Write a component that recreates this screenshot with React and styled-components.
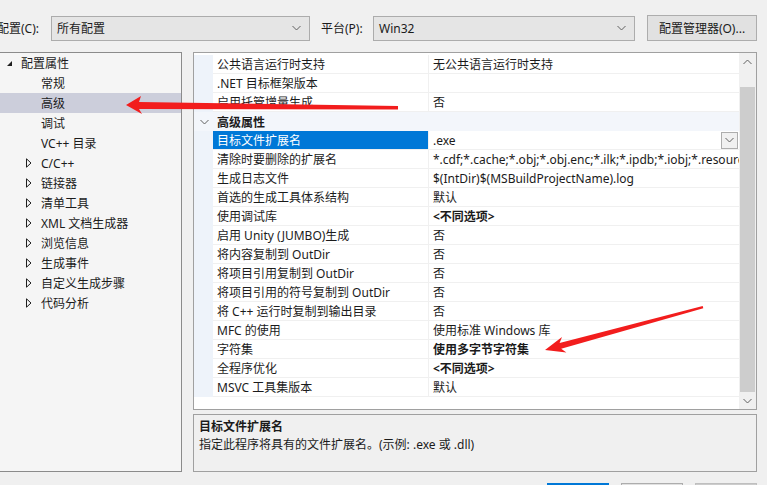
import React from "react";
import styled, { createGlobalStyle } from "styled-components";

const GlobalStyle = createGlobalStyle`
  html, body {
    margin: 0;
    padding: 0;
    background: #f0f0f0;
  }
  body {
    font-family: "Noto Sans", "Noto Sans CJK SC", sans-serif;
    font-size: 12px;
    color: #1b1b1b;
  }
`;

const treeItems = [
  { text: "配置属性", level: 0, open: true },
  { text: "常规", level: 1 },
  { text: "高级", level: 1, selected: true },
  { text: "调试", level: 1 },
  { text: "VC++ 目录", level: 1 },
  { text: "C/C++", level: 1, closed: true },
  { text: "链接器", level: 1, closed: true },
  { text: "清单工具", level: 1, closed: true },
  { text: "XML 文档生成器", level: 1, closed: true },
  { text: "浏览信息", level: 1, closed: true },
  { text: "生成事件", level: 1, closed: true },
  { text: "自定义生成步骤", level: 1, closed: true },
  { text: "代码分析", level: 1, closed: true },
];

const props = [
  { name: "公共语言运行时支持", value: "无公共语言运行时支持" },
  { name: ".NET 目标框架版本", value: "" },
  { name: "启用托管增量生成", value: "否" },
  { category: "高级属性" },
  { name: "目标文件扩展名", value: ".exe", selected: true },
  { name: "清除时要删除的扩展名", value: "*.cdf;*.cache;*.obj;*.obj.enc;*.ilk;*.ipdb;*.iobj;*.resources;*.tlb;*.tli;*.tlh;*.tmp;*.rsp" },
  { name: "生成日志文件", value: "$(IntDir)$(MSBuildProjectName).log" },
  { name: "首选的生成工具体系结构", value: "默认" },
  { name: "使用调试库", value: "<不同选项>", bold: true },
  { name: "启用 Unity (JUMBO)生成", value: "否" },
  { name: "将内容复制到 OutDir", value: "否" },
  { name: "将项目引用复制到 OutDir", value: "否" },
  { name: "将项目引用的符号复制到 OutDir", value: "否" },
  { name: "将 C++ 运行时复制到输出目录", value: "否" },
  { name: "MFC 的使用", value: "使用标准 Windows 库" },
  { name: "字符集", value: "使用多字节字符集", bold: true },
  { name: "全程序优化", value: "<不同选项>", bold: true },
  { name: "MSVC 工具集版本", value: "默认" },
];

function Chevron({ up }) {
  return (
    <svg width="9" height="6" viewBox="0 0 9 6">
      <path
        d={up ? "M0.5 5 L4.5 1 L8.5 5" : "M0.5 1 L4.5 5 L8.5 1"}
        fill="none"
        stroke="#606060"
        strokeWidth="1"
      />
    </svg>
  );
}

function Expander({ open }) {
  if (open) {
    return (
      <svg width="7" height="7" viewBox="0 0 7 7">
        <path d="M6 1 L6 6 L1 6 Z" fill="#1e1e1e" />
      </svg>
    );
  }
  return (
    <svg width="6" height="10" viewBox="0 0 6 10">
      <path d="M0.5 0.8 L5 5 L0.5 9.2 Z" fill="none" stroke="#1e1e1e" strokeWidth="1" />
    </svg>
  );
}

function App() {
  return (
    <Root>
      <GlobalStyle />
      <TopBar>
        <FieldLabel $w={54} $shift={-3}>配置(C):</FieldLabel>
        <Combo $w={259}>
          <span>所有配置</span>
          <Chevron />
        </Combo>
        <FieldLabel $w={52} $gap={11}>平台(P):</FieldLabel>
        <Combo $w={262}>
          <span>Win32</span>
          <Chevron />
        </Combo>
        <ToolButton>配置管理器(O)...</ToolButton>
      </TopBar>

      <Body>
        <TreePanel>
          {treeItems.map((item) => (
            <TreeRow key={item.text} $level={item.level} $selected={item.selected}>
              <ExpanderSlot>
                {item.open && <Expander open />}
                {item.closed && <Expander />}
              </ExpanderSlot>
              {item.text}
            </TreeRow>
          ))}
        </TreePanel>

        <RightColumn>
          <Grid>
            <Rows>
              {props.map((p) =>
                p.category ? (
                  <CategoryRow key={p.category}>
                    <GutterCell $cat>
                      <Chevron />
                    </GutterCell>
                    <CategoryName>{p.category}</CategoryName>
                  </CategoryRow>
                ) : (
                  <PropRow key={p.name}>
                    <GutterCell />
                    <NameCell $selected={p.selected}>{p.name}</NameCell>
                    <ValueCell $bold={p.bold}>
                      <ValueText>{p.value}</ValueText>
                      {p.selected && (
                        <DropButton>
                          <Chevron />
                        </DropButton>
                      )}
                    </ValueCell>
                  </PropRow>
                )
              )}
            </Rows>
            <ScrollBar>
              <ScrollArrow>
                <Chevron up />
              </ScrollArrow>
              <ScrollTrack>
                <ScrollThumb />
              </ScrollTrack>
              <ScrollArrow>
                <Chevron />
              </ScrollArrow>
            </ScrollBar>
          </Grid>

          <Description>
            <DescTitle>目标文件扩展名</DescTitle>
            <DescText>指定此程序将具有的文件扩展名。(示例: .exe 或 .dll)</DescText>
          </Description>
        </RightColumn>
      </Body>

      <Footer>
        <DialogButton $primary>确定</DialogButton>
        <DialogButton>取消</DialogButton>
        <DialogButton $disabled>应用(A)</DialogButton>
      </Footer>

      {/* red annotation arrows drawn over the dialog */}
      <Overlay width="767" height="485" viewBox="0 0 767 485">
        <polygon
          fill="#f21d1d"
          points="126,105 141,96 139,102 398,106 398,109.5 139,109 142,114"
        />
        <polygon
          fill="#f21d1d"
          points="545,350 562,337 559.6,342.9 702.7,306 703.3,308.3 561.2,348.7 566.4,352.6"
        />
      </Overlay>
    </Root>
  );
}

const Root = styled.div`
  position: relative;
  width: 767px;
  height: 485px;
  overflow: hidden;
  background: #f0f0f0;
`;

const TopBar = styled.div`
  display: flex;
  align-items: center;
  height: 26px;
  padding-top: 15px;
`;

const FieldLabel = styled.div`
  flex: none;
  width: ${(p) => p.$w}px;
  margin-left: ${(p) => (p.$shift || 0) + (p.$gap || 0)}px;
  white-space: nowrap;
`;

const Combo = styled.div`
  flex: none;
  box-sizing: border-box;
  width: ${(p) => p.$w}px;
  height: 25px;
  display: flex;
  align-items: center;
  justify-content: space-between;
  padding: 0 8px 0 5px;
  background: #e5e5e5;
  border: 1px solid #acacac;
`;

const ToolButton = styled.div`
  flex: none;
  box-sizing: border-box;
  width: 110px;
  height: 26px;
  margin-left: 12px;
  display: flex;
  align-items: center;
  justify-content: center;
  background: #e1e1e1;
  border: 1px solid #adadad;
`;

const Body = styled.div`
  display: flex;
  margin-top: 11px;
`;

const TreePanel = styled.div`
  flex: none;
  box-sizing: border-box;
  width: 182px;
  height: 420px;
  background: #f5f5f5;
  border: 1px solid #8b8b8b;
  border-left: none;
`;

const TreeRow = styled.div`
  display: flex;
  align-items: center;
  height: 20px;
  padding-left: ${(p) => (p.$level === 0 ? 6 : 26)}px;
  background: ${(p) => (p.$selected ? "#cccedb" : "transparent")};
  white-space: nowrap;
`;

const ExpanderSlot = styled.span`
  display: inline-flex;
  align-items: center;
  justify-content: flex-start;
  width: 15px;
  height: 20px;
`;

const RightColumn = styled.div`
  flex: none;
  width: 564px;
  margin-left: 11px;
  display: flex;
  flex-direction: column;
  gap: 4px;
`;

const Grid = styled.div`
  box-sizing: border-box;
  height: 358px;
  display: flex;
  background: #fff;
  border: 1px solid #a0a0a0;
`;

const Rows = styled.div`
  flex: 1;
  min-width: 0;
  padding-top: 2px;
`;

const PropRow = styled.div`
  display: grid;
  grid-template-columns: 19px 215px 1fr;
  height: 19px;
`;

const CategoryRow = styled.div`
  display: grid;
  grid-template-columns: 19px 1fr;
  height: 19px;
  background: #f3f6fb;
`;

const GutterCell = styled.div`
  display: flex;
  align-items: center;
  justify-content: center;
  background: ${(p) => (p.$cat ? "transparent" : "#eef3fa")};
  padding-left: 2px;
`;

const CategoryName = styled.div`
  display: flex;
  align-items: center;
  padding-left: 4px;
  font-weight: bold;
`;

const NameCell = styled.div`
  display: flex;
  align-items: center;
  padding-left: 4px;
  white-space: nowrap;
  overflow: hidden;
  color: ${(p) => (p.$selected ? "#fff" : "#1b1b1b")};
  background: ${(p) => (p.$selected ? "#0078d7" : "#fff")};
  border-bottom: 1px solid #f0f0f0;
`;

const ValueCell = styled.div`
  display: flex;
  align-items: center;
  min-width: 0;
  padding-left: 4px;
  font-weight: ${(p) => (p.$bold ? "bold" : "normal")};
  border-left: 1px solid #f0f0f0;
  border-bottom: 1px solid #f0f0f0;
`;

const ValueText = styled.span`
  flex: 1;
  min-width: 0;
  white-space: nowrap;
  overflow: hidden;
`;

const DropButton = styled.div`
  flex: none;
  box-sizing: border-box;
  width: 17px;
  height: 17px;
  margin-right: 1px;
  display: flex;
  align-items: center;
  justify-content: center;
  background: #f0f0f0;
  border: 1px solid #adadad;
`;

const ScrollBar = styled.div`
  flex: none;
  width: 17px;
  display: flex;
  flex-direction: column;
  background: #f0f0f0;
`;

const ScrollArrow = styled.div`
  height: 17px;
  display: flex;
  align-items: center;
  justify-content: center;
`;

const ScrollTrack = styled.div`
  flex: 1;
  display: flex;
  flex-direction: column;
  padding: 17px 1px 0;
`;

const ScrollThumb = styled.div`
  flex: 1;
  background: #cdcdcd;
`;

const Description = styled.div`
  box-sizing: border-box;
  height: 58px;
  padding: 3px 5px;
  background: #f0f0f0;
  border: 1px solid #a0a0a0;
  line-height: 18px;
`;

const DescTitle = styled.div`
  font-weight: bold;
`;

const DescText = styled.div``;

const Footer = styled.div`
  display: flex;
  justify-content: flex-end;
  gap: 12px;
  margin-top: 11px;
  padding-right: 10px;
`;

const DialogButton = styled.div`
  box-sizing: border-box;
  width: 62px;
  height: 23px;
  display: flex;
  align-items: center;
  justify-content: center;
  background: ${(p) => (p.$primary ? "#0078d7" : p.$disabled ? "#cccccc" : "#e1e1e1")};
  border: 1px solid ${(p) => (p.$primary ? "#0078d7" : p.$disabled ? "#bfbfbf" : "#adadad")};
  color: ${(p) => (p.$primary ? "#fff" : "#1b1b1b")};
`;

const Overlay = styled.svg`
  position: absolute;
  left: 0;
  top: 0;
  pointer-events: none;
`;

export default App;
